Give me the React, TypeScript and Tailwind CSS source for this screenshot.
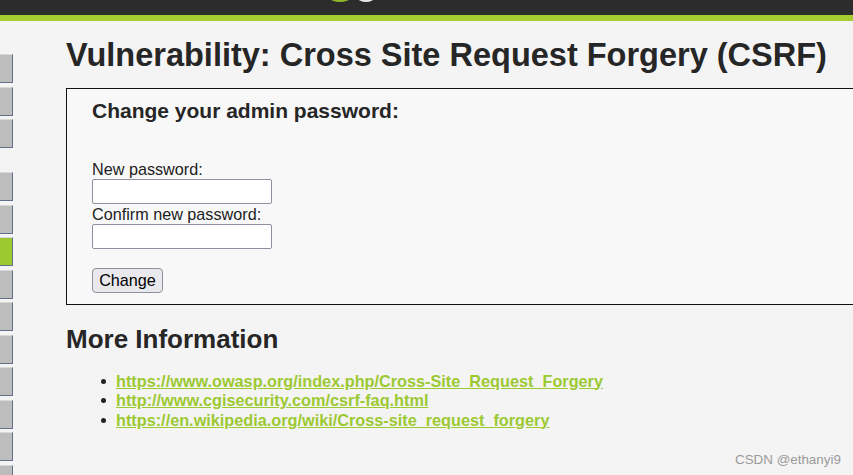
import React from 'react';

const menuTop = [0, 1, 2];
const menuBottom = [0, 1, 2, 3, 4, 5, 6, 7, 8, 9];

const links = [
  'https://www.owasp.org/index.php/Cross-Site_Request_Forgery',
  'http://www.cgisecurity.com/csrf-faq.html',
  'https://en.wikipedia.org/wiki/Cross-site_request_forgery',
];

const MenuItem = ({ active = false }: { active?: boolean }) => (
  <div
    className={`h-[29px] w-[13px] border-t border-r border-b border-t-[#d8d8d8] border-r-[#62708c] border-b-[#62708c] ${
      active ? 'bg-[#9bc92f]' : 'bg-[#bdbdbd]'
    }`}
  />
);

export default function App() {
  return (
    <div
      className="relative w-[853px] h-[475px] overflow-hidden bg-[#f4f4f4] text-[#222]"
      style={{ fontFamily: '"Liberation Sans", Arial, sans-serif' }}
    >
      {/* Header */}
      <div className="h-[21px] bg-[#2c2c2c] border-b-[6px] border-[#a6cc32] flex items-start">
        <svg width="45" height="3" viewBox="0 0 45 3" className="ml-[331px]">
          <ellipse cx="9" cy="-2" rx="10" ry="4" fill="#8fb82c" />
          <ellipse cx="35" cy="-2" rx="8" ry="4" fill="#e8e8e8" />
        </svg>
      </div>

      <div className="flex">
        {/* Side menu */}
        <div className="flex flex-col pt-[33px] shrink-0">
          <div className="flex flex-col gap-[3.5px]">
            {menuTop.map((i) => (
              <MenuItem key={i} />
            ))}
          </div>
          <div className="flex flex-col gap-[3.5px] mt-[24px]">
            {menuBottom.map((i) => (
              <MenuItem key={i} active={i === 2} />
            ))}
          </div>
        </div>

        {/* Main body */}
        <div className="ml-[53px] pt-[16px] shrink-0">
          <h1 className="text-[32.5px] font-bold leading-[37.4px] text-[#262626]">
            Vulnerability: Cross Site Request Forgery (CSRF)
          </h1>

          <div className="mt-[13.6px] w-[820px] border border-[#111] bg-[#f8f8f8] pl-[25px] pt-[10.3px] pb-[11px]">
            <h3 className="text-[21px] font-bold leading-[24px] text-[#262626]">
              Change your admin password:
            </h3>
            <div className="mt-[36.7px] text-[16.2px] leading-[18.4px]">
              <div>New password:</div>
              <input
                type="password"
                className="mt-[0.5px] block h-[25px] w-[180px] rounded-[2px] border border-[#8f8f9d] bg-white"
              />
              <div className="mt-[1.5px]">Confirm new password:</div>
              <input
                type="password"
                className="block h-[25px] w-[180px] rounded-[2px] border border-[#8f8f9d] bg-white"
              />
              <button className="mt-[19px] block h-[25.5px] w-[71px] rounded-[4px] border border-[#8f8f9d] bg-[#e9e9ed] text-[16.2px] text-black">
                Change
              </button>
            </div>
          </div>

          <h2 className="mt-[19px] text-[26px] font-bold leading-[30px] text-[#262626]">
            More Information
          </h2>
          <ul className="mt-[17px] ml-[35px]">
            {links.map((l) => (
              <li key={l} className="flex items-center h-[19.5px]">
                <span className="w-[5px] h-[5px] rounded-full bg-[#222] shrink-0" />
                <a
                  href="#"
                  className="ml-[10px] text-[16.25px] font-bold text-[#9cc932] underline leading-[19px]"
                >
                  {l}
                </a>
              </li>
            ))}
          </ul>
        </div>
      </div>

      <div className="absolute left-[735px] top-[450px] text-[13.4px] text-[#9a9a9a]">
        CSDN @ethanyi9
      </div>
    </div>
  );
}
